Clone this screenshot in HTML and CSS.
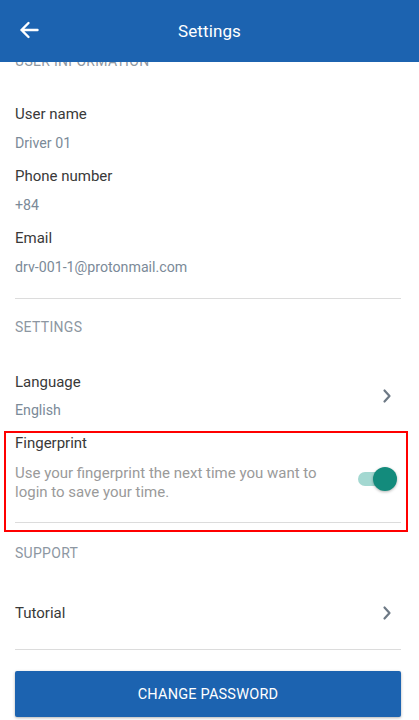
FILE: index.html
```html
<!DOCTYPE html>
<html lang="en">
<head>
<meta charset="utf-8">
<title>Settings</title>
<link rel="stylesheet" href="styles.css">
</head>
<body>
<div class="screen">
  <header class="appbar">
    <svg class="back" width="20" height="18" viewBox="0 0 20 18" aria-hidden="true">
      <path d="M18.5 9H2.5M9.5 2L2.5 9l7 7" fill="none" stroke="#fff" stroke-width="2.4" stroke-linecap="round" stroke-linejoin="round"/>
    </svg>
    <h1 class="title">Settings</h1>
  </header>

  <main class="content">
    <div class="section-title first">USER INFORMATION</div>

    <div class="field f1">
      <div class="label">User name</div>
      <div class="value">Driver 01</div>
    </div>
    <div class="field">
      <div class="label">Phone number</div>
      <div class="value">+84</div>
    </div>
    <div class="field">
      <div class="label">Email</div>
      <div class="value">drv-001-1@protonmail.com</div>
    </div>
    <div class="divider d1"></div>

    <div class="section-title s2">SETTINGS</div>

    <div class="row lang">
      <div class="row-text">
        <div class="label">Language</div>
        <div class="value v2">English</div>
      </div>
      <svg class="chev" width="10" height="16" viewBox="0 0 10 16" aria-hidden="true">
        <path d="M2.5 2.5L7.5 8l-5 5.5" fill="none" stroke="#6d7985" stroke-width="2.2" stroke-linecap="round" stroke-linejoin="round"/>
      </svg>
    </div>

    <div class="highlight">
      <div class="label">Fingerprint</div>
      <div class="fp-row">
        <div class="desc">Use your fingerprint the next time you want to login to save your time.</div>
        <div class="toggle"><span class="track"></span><span class="thumb"></span></div>
      </div>
      <div class="divider d2"></div>
    </div>

    <div class="section-title s3">SUPPORT</div>

    <div class="row tut">
      <div class="label">Tutorial</div>
      <svg class="chev" width="10" height="16" viewBox="0 0 10 16" aria-hidden="true">
        <path d="M2.5 2.5L7.5 8l-5 5.5" fill="none" stroke="#6d7985" stroke-width="2.2" stroke-linecap="round" stroke-linejoin="round"/>
      </svg>
    </div>
    <div class="divider d3"></div>

    <button class="btn" type="button">CHANGE PASSWORD</button>
  </main>
</div>
</body>
</html>
```

FILE: styles.css
```css
* { box-sizing: border-box; }
html, body { margin: 0; padding: 0; background: #fff; }
body {
  font-family: Roboto, "Liberation Sans", Arial, sans-serif;
  width: 419px;
  height: 720px;
  overflow: hidden;
}
.screen { position: relative; width: 419px; height: 720px; overflow: hidden; }

.appbar {
  position: absolute;
  top: 0; left: 0; right: 0;
  height: 62px;
  background: #1c63b0;
  display: flex;
  align-items: center;
  justify-content: center;
  z-index: 2;
}
.back { position: absolute; left: 19px; top: 21px; }
.title {
  margin: 0;
  color: #fff;
  font-size: 17px;
  font-weight: 400;
  letter-spacing: 0.1px;
}

.content { padding: 51px 18px 0 15px; }

.section-title {
  font-size: 14px;
  line-height: 20px;
  color: #8d97a2;
  letter-spacing: 0.3px;
}
.s2 { margin-top: 18px; }
.s3 { margin-top: 11px; }

.label {
  font-size: 15px;
  line-height: 20px;
  color: #393939;
}
.value {
  font-size: 14.2px;
  line-height: 20px;
  color: #7b8a98;
  margin-top: 9px;
}
.field { margin-top: 13px; }
.field.f1 { margin-top: 33px; }

.divider { height: 1px; background: #dcdcdc; }
.d1 { margin-top: 21px; }

.row {
  display: flex;
  align-items: center;
  justify-content: space-between;
}
.lang { margin-top: 35px; }
.lang .v2 { margin-top: 8px; }
.chev { margin-right: 9px; }

.highlight {
  margin: 11px -7px 0 -11px;
  border: 2px solid #f00;
  padding: 0 5px 7px 9px;
}
.fp-row {
  display: flex;
  align-items: center;
  justify-content: space-between;
  margin-top: 11px;
}
.desc {
  font-size: 15px;
  line-height: 19px;
  color: #9a9a9a;
  width: 310px;
}
.toggle {
  position: relative;
  width: 40px;
  height: 26px;
  margin-right: 4px;
  margin-top: -8px;
}
.track {
  position: absolute;
  left: 1px; top: 6px;
  width: 35px; height: 14px;
  border-radius: 7px;
  background: #a3d8d1;
}
.thumb {
  position: absolute;
  left: 16px; top: 1px;
  width: 24px; height: 24px;
  border-radius: 50%;
  background: #138b7c;
  box-shadow: 0 1px 3px rgba(0,0,0,0.3);
}
.d2 { margin-top: 20px; }

.tut { margin-top: 40px; }
.d3 { margin-top: 26px; }

.btn {
  display: block;
  width: 100%;
  height: 46px;
  margin-top: 21px;
  border: none;
  border-radius: 2px;
  background: #1c63b0;
  color: #fff;
  font-family: Roboto, "Liberation Sans", Arial, sans-serif;
  font-size: 14.5px;
  letter-spacing: 0.2px;
  box-shadow: 0 1px 3px rgba(0,0,0,0.3);
}
```
